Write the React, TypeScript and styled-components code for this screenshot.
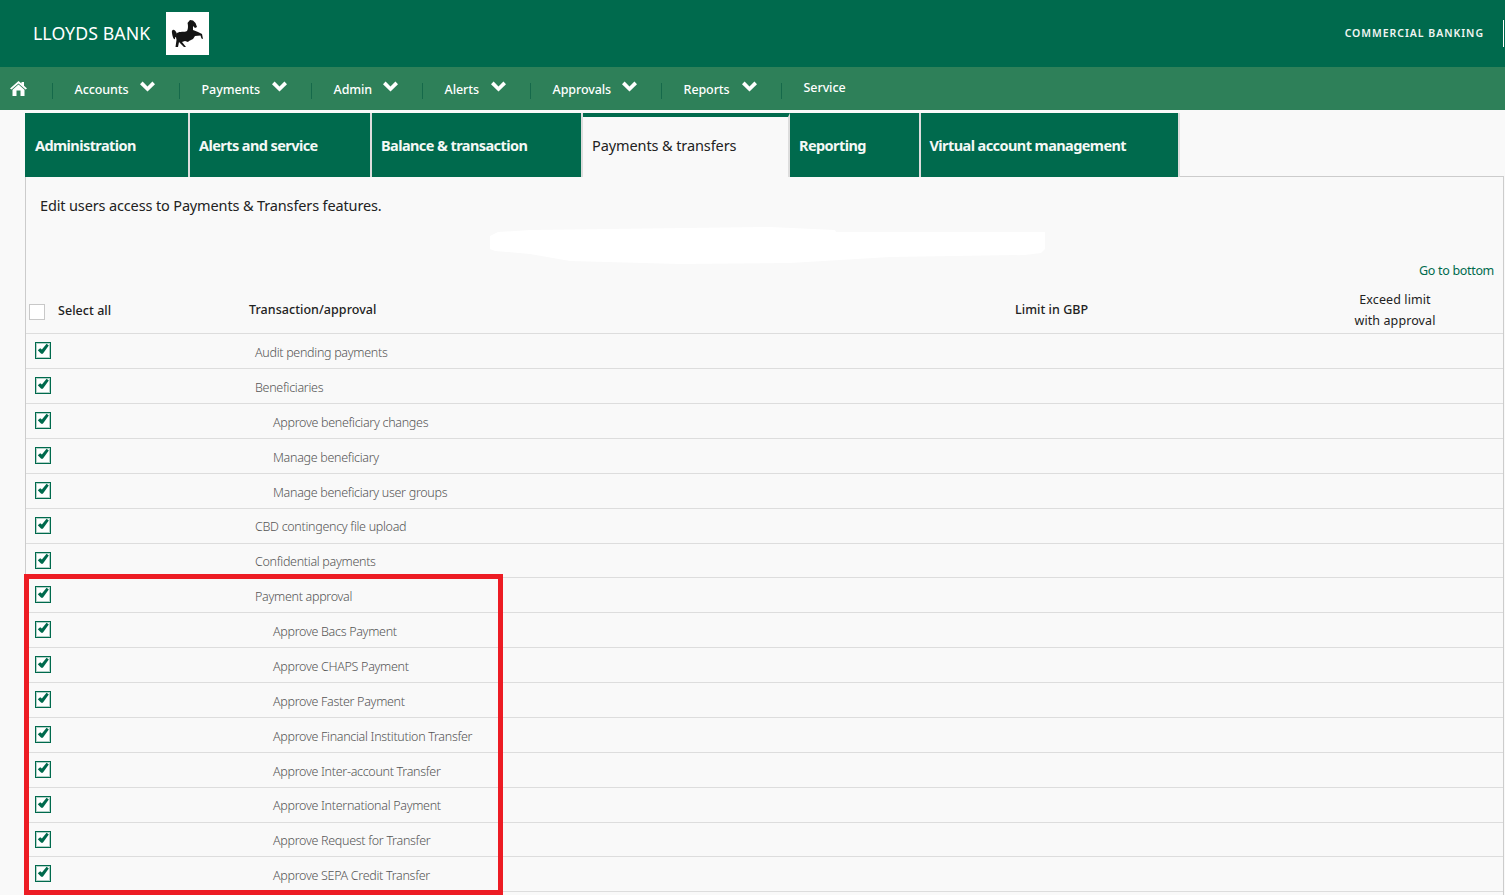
import React from "react";
import styled, { createGlobalStyle } from "styled-components";

const FONT = `"Noto Sans", "Open Sans", sans-serif`;
const DARK = "#006a4d";
const MID = "#2e8059";
const LINE = "#dddddd";

const Global = createGlobalStyle`
  html, body { margin: 0; padding: 0; background: #f9f9f9; height: 100%; overflow: hidden; }
  body { font-family: ${FONT}; color: #222; }
  * { box-sizing: border-box; }
`;

const Page = styled.div`
  position: relative;
  width: 1505px;
  height: 895px;
  overflow: hidden;
  background: #f9f9f9;
`;

const TopBar = styled.header`
  height: 67px;
  background: ${DARK};
  position: relative;
  display: flex;
  align-items: flex-start;
`;
const BrandName = styled.div`
  margin: 21px 0 0 33px;
  width: 133px;
  font-size: 17.7px;
  line-height: 24px;
  color: #fff;
  letter-spacing: 0.1px;
  white-space: nowrap;
`;
const LogoBox = styled.div`
  margin-top: 12px;
  width: 43px;
  height: 43px;
  background: #fff;
  svg { display: block; width: 43px; height: 43px; }
`;
const Division = styled.div`
  position: absolute;
  right: 21px;
  top: 25px;
  font-size: 10.5px;
  line-height: 16px;
  font-weight: 600;
  letter-spacing: 0.97px;
  color: #f0f5f3;
`;
const DivisionBar = styled.div`
  position: absolute;
  left: 1503px;
  top: 20px;
  width: 1px;
  height: 27px;
  background: #fff;
`;

const NavBar = styled.nav`
  height: 43px;
  background: ${MID};
  display: flex;
`;
const HomeItem = styled.div`
  width: 52px;
  padding: 14px 0 0 10px;
  svg { display: block; width: 17px; height: 15px; }
`;
const NavItem = styled.div<{ $w: number }>`
  position: relative;
  width: ${(p) => p.$w}px;
  display: flex;
  padding: 0 24px 0 22.6px;
  color: #fff;
  font-size: 12.5px;
  font-weight: 500;
  letter-spacing: -0.1px;
  &::before {
    content: "";
    position: absolute;
    left: 0;
    top: 16px;
    width: 1px;
    height: 16px;
    background: #15694a;
  }
`;
const NavLabel = styled.span<{ $raised?: boolean }>`
  margin-top: ${(p) => (p.$raised ? 12 : 14)}px;
  line-height: 17px;
`;
const Chevron = styled.svg`
  margin: 14px 0 0 auto;
  width: 15px;
  height: 12px;
`;

const TabRow = styled.div`
  position: absolute;
  left: 25px;
  top: 113px;
  height: 64px;
  display: flex;
  z-index: 2;
`;
const Tab = styled.div<{ $w: number; $pad: number; $active?: boolean }>`
  width: ${(p) => p.$w}px;
  height: 64px;
  padding: ${(p) => (p.$active ? 18 : 22)}px 0 0 ${(p) => p.$pad}px;
  background: ${(p) => (p.$active ? "#f9f9f9" : DARK)};
  border-top: ${(p) => (p.$active ? `4px solid ${DARK}` : "none")};
  border-right: 2px solid ${LINE};
  color: ${(p) => (p.$active ? "#222" : "#f4f8f6")};
  font-size: 14.5px;
  line-height: 21px;
  font-weight: ${(p) => (p.$active ? 400 : 700)};
  letter-spacing: ${(p) => (p.$active ? "-0.1px" : "-0.58px")};
`;

const Panel = styled.main`
  position: absolute;
  left: 25px;
  top: 176px;
  width: 1479px;
  height: 730px;
  border: 1px solid #cccccc;
  border-bottom: none;
`;
const Intro = styled.p`
  position: absolute;
  left: 14px;
  top: 18px;
  margin: 0;
  font-size: 14.5px;
  line-height: 21px;
  letter-spacing: -0.14px;
  color: #222;
`;
const Redaction = styled.svg`
  position: absolute;
  left: 464px;
  top: 50px;
  width: 556px;
  height: 38px;
`;
const BottomLink = styled.a`
  position: absolute;
  right: 9px;
  top: 84px;
  font-size: 12.5px;
  line-height: 20px;
  letter-spacing: -0.32px;
  color: ${DARK};
`;

const HeaderRow = styled.div`
  position: absolute;
  left: 0;
  right: 0;
  top: 110px;
  height: 47px;
  border-bottom: 1px solid ${LINE};
  font-size: 12.5px;
  font-weight: 500;
  color: #222;
  letter-spacing: 0.05px;
`;
const HeaderBox = styled.div`
  position: absolute;
  left: 3px;
  top: 17px;
  width: 16px;
  height: 16px;
  background: #fff;
  border: 1px solid #c8c8c8;
`;
const HeaderCell = styled.div<{ $x: number; $y: number }>`
  position: absolute;
  left: ${(p) => p.$x}px;
  top: ${(p) => p.$y}px;
  line-height: 20px;
`;
const ExceedCell = styled.div`
  position: absolute;
  left: 1309px;
  top: 2px;
  width: 120px;
  text-align: center;
  line-height: 21px;
  font-weight: 400;
  letter-spacing: 0.1px;
`;

const RowList = styled.div`
  position: absolute;
  left: 0;
  right: 0;
  top: 157.3px;
`;
const Row = styled.div`
  position: relative;
  height: 34.875px;
  border-bottom: 1px solid ${LINE};
`;
const CheckBox = styled.div`
  position: absolute;
  left: 9px;
  top: 8px;
  width: 16px;
  height: 17px;
  border: 1px solid ${DARK};
  box-shadow: inset 0 0 0 1px rgba(0, 106, 77, 0.3);
  background: #fff;
  svg { display: block; width: 14px; height: 15px; }
`;
const RowLabel = styled.span<{ $indent: boolean }>`
  position: absolute;
  left: ${(p) => (p.$indent ? 247 : 229)}px;
  top: 8.76px;
  font-size: 12.5px;
  line-height: 19px;
  font-weight: 300;
  letter-spacing: -0.3px;
  color: #555;
  white-space: nowrap;
`;

const Annotation = styled.div`
  position: absolute;
  left: 24px;
  top: 574px;
  width: 479px;
  height: 321px;
  border: 5px solid #ed1c24;
  z-index: 3;
`;

const rows: [string, boolean][] = [
  ["Audit pending payments", false],
  ["Beneficiaries", false],
  ["Approve beneficiary changes", true],
  ["Manage beneficiary", true],
  ["Manage beneficiary user groups", true],
  ["CBD contingency file upload", false],
  ["Confidential payments", false],
  ["Payment approval", false],
  ["Approve Bacs Payment", true],
  ["Approve CHAPS Payment", true],
  ["Approve Faster Payment", true],
  ["Approve Financial Institution Transfer", true],
  ["Approve Inter-account Transfer", true],
  ["Approve International Payment", true],
  ["Approve Request for Transfer", true],
  ["Approve SEPA Credit Transfer", true],
];

const navItems: { label: string; w: number; chevron: boolean }[] = [
  { label: "Accounts", w: 127, chevron: true },
  { label: "Payments", w: 132, chevron: true },
  { label: "Admin", w: 111, chevron: true },
  { label: "Alerts", w: 108, chevron: true },
  { label: "Approvals", w: 131, chevron: true },
  { label: "Reports", w: 120, chevron: true },
  { label: "Service", w: 120, chevron: false },
];

const tabs: { label: string; w: number; pad: number; active?: boolean }[] = [
  { label: "Administration", w: 165, pad: 10 },
  { label: "Alerts and service", w: 182, pad: 9 },
  { label: "Balance & transaction", w: 211, pad: 9 },
  { label: "Payments & transfers", w: 207, pad: 9, active: true },
  { label: "Reporting", w: 131, pad: 9 },
  { label: "Virtual account management", w: 259, pad: 8.5 },
];

const Horse = () => (
  <svg viewBox="0 0 43 43">
    <path
      fill="#141414"
      d="M24 8L27 8.5L29.5 11L31 15L29 16L27 14L27 18L32 20L36 22L37 27L35.5 26.5L34.5 23.5L29 24L27 27L23 29L22 30L19 29L16 30L20 35L18 35L13 30L12 35L9.5 35L10.5 28L10 24L11 21C14 19 18 20.5 21 19C22.5 17 22 12 21.5 11Z"
    />
    <path
      fill="#141414"
      d="M11 22C9 16 5 17 6 21C6.5 25 8 28 9 27C9 24 10 25 10.5 27Z"
    />
  </svg>
);

const HomeIcon = () => (
  <svg viewBox="0 0 17 15">
    <path fill="#fff" d="M0 7.5L8.5 0L11.5 2.6V1H14V4.8L17 7.5L15.5 8.5L8.5 2.5L1.5 8.5Z" />
    <path fill="#fff" d="M2.5 8.7L8.5 3.6L14.5 8.7V15H10.5V9.5H6.5V15H2.5Z" />
  </svg>
);

const ChevronIcon = () => (
  <Chevron viewBox="0 0 15 12">
    <path fill="#fff" d="M0 3.2L2.6 0.6L7.5 5.4L12.4 0.6L15 3.2L7.5 10.6Z" />
  </Chevron>
);

const Tick = () => (
  <svg viewBox="0 0 14 15">
    <path fill={DARK} d="M1.8 7.2L4.2 5.2L5.9 6.6L10.6 0.8L12.8 2.6L6.8 10.8L5.2 10.8Z" />
  </svg>
);

export default function App() {
  return (
    <Page>
      <Global />
      <TopBar>
        <BrandName>LLOYDS BANK</BrandName>
        <LogoBox>
          <Horse />
        </LogoBox>
        <Division>COMMERCIAL BANKING</Division>
        <DivisionBar />
      </TopBar>
      <NavBar>
        <HomeItem>
          <HomeIcon />
        </HomeItem>
        {navItems.map((n) => (
          <NavItem key={n.label} $w={n.w}>
            <NavLabel $raised={!n.chevron}>{n.label}</NavLabel>
            {n.chevron && <ChevronIcon />}
          </NavItem>
        ))}
      </NavBar>
      <TabRow>
        {tabs.map((t) => (
          <Tab key={t.label} $w={t.w} $pad={t.pad} $active={t.active}>
            {t.label}
          </Tab>
        ))}
      </TabRow>
      <Panel>
        <Intro>Edit users access to Payments &amp; Transfers features.</Intro>
        <Redaction viewBox="0 0 556 38">
          <path
            fill="#fff"
            d="M0 9L8 5L40 3L280 0L345 3L346 5L555 5L555 22L551 26L535 28L400 30L300 36L190 37L80 34L40 27L5 24L0 22Z"
          />
        </Redaction>
        <BottomLink>Go to bottom</BottomLink>
        <HeaderRow>
          <HeaderBox />
          <HeaderCell $x={32} $y={14}>Select all</HeaderCell>
          <HeaderCell $x={223} $y={13}>Transaction/approval</HeaderCell>
          <HeaderCell $x={989} $y={13}>Limit in GBP</HeaderCell>
          <ExceedCell>
            Exceed limit
            <br />
            with approval
          </ExceedCell>
        </HeaderRow>
        <RowList>
          {rows.map(([label, indent]) => (
            <Row key={label}>
              <CheckBox>
                <Tick />
              </CheckBox>
              <RowLabel $indent={indent}>{label}</RowLabel>
            </Row>
          ))}
        </RowList>
      </Panel>
      <Annotation />
    </Page>
  );
}
